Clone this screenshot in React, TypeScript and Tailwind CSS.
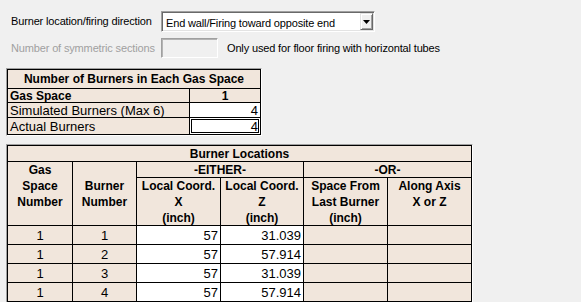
import React from "react";

const beige = "bg-[#f1e6dc]";

function Cell({
  children,
  className = "",
}: {
  children?: React.ReactNode;
  className?: string;
}) {
  return <div className={`flex ${className}`}>{children}</div>;
}

export default function App() {
  const rows = [
    { g: "1", b: "1", x: "57", z: "31.039" },
    { g: "1", b: "2", x: "57", z: "57.914" },
    { g: "1", b: "3", x: "57", z: "31.039" },
    { g: "1", b: "4", x: "57", z: "57.914" },
  ];
  return (
    <div
      className="w-[581px] h-[302px] bg-[#f0f0f0] overflow-hidden text-black"
      style={{ fontFamily: '"Liberation Sans", Arial, sans-serif' }}
    >
      {/* Row 1 */}
      <div className="flex items-center h-[21px] mt-[11px] pl-[11px] text-[11px] tracking-[-0.15px]">
        <div className="w-[150px]">Burner location/firing direction</div>
        <div className="relative w-[214px] h-[21px] bg-white border border-t-[#a0a0a0] border-l-[#a0a0a0] border-r-[#ffffff] border-b-[#ffffff] shadow-[inset_1px_1px_0_#696969,inset_-1px_-1px_0_#e3e3e3]">
          <div className="absolute left-[4px] top-[3px]">End wall/Firing toward opposite end</div>
          <div className="absolute right-[1px] top-[1px] w-[13px] h-[17px] bg-[#f0f0f0] border border-t-[#e3e3e3] border-l-[#e3e3e3] border-r-[#696969] border-b-[#696969] shadow-[inset_1px_1px_0_#ffffff,inset_-1px_-1px_0_#a0a0a0] flex items-center justify-center">
            <svg width="7" height="4" viewBox="0 0 7 4">
              <polygon points="0,0 7,0 3.5,4" fill="#000" />
            </svg>
          </div>
        </div>
      </div>

      {/* Row 2 */}
      <div className="flex items-center h-[20px] mt-[6px] pl-[11px] text-[11px] tracking-[-0.15px]">
        <div className="w-[150px] text-[#a0a0a0]">Number of symmetric sections</div>
        <div className="w-[57px] h-[20px] bg-[#f0f0f0] border border-t-[#a0a0a0] border-l-[#a0a0a0] border-r-[#ffffff] border-b-[#ffffff] shadow-[inset_1px_1px_0_#b4b4b4]" />
        <div className="ml-[9px]">Only used for floor firing with horizontal tubes</div>
      </div>

      {/* Table 1 */}
      <div className="mt-[10px] ml-[6px] inline-block align-top border border-t-[#a0a0a0] border-l-[#a0a0a0] border-r-white border-b-white">
        <div className="grid grid-cols-[181px_70px] grid-rows-[18px_13px_14px_16px] gap-[1px] p-[1px] bg-black text-[13px] leading-none">
          <Cell className={`col-span-2 ${beige} items-center justify-center font-bold text-[12px]`}>
            Number of Burners in Each Gas Space
          </Cell>
          <Cell className={`${beige} items-center pl-[2px] font-bold text-[12px]`}>Gas Space</Cell>
          <Cell className={`${beige} items-center justify-center font-bold text-[12px]`}>1</Cell>
          <Cell className={`${beige} items-center pl-[2px]`}>Simulated Burners (Max 6)</Cell>
          <Cell className="bg-white items-center justify-end pr-[2px]">4</Cell>
          <Cell className={`${beige} items-center pl-[2px]`}>Actual Burners</Cell>
          <Cell className="bg-white items-center justify-end pr-[2px] shadow-[inset_0_0_0_1px_#ffffff,inset_0_0_0_2px_#000000]">
            4
          </Cell>
        </div>
      </div>

      {/* Table 2 */}
      <div className="block">
        <div className="mt-[8px] ml-[6px] inline-block align-top border border-t-[#a0a0a0] border-l-[#a0a0a0] border-r-white border-b-white">
          <div className="grid grid-cols-[64px_63px_83px_82px_83px_83px] grid-rows-[15px_15px_47px_18px_18px_18px_18px] gap-[1px] p-[1px] bg-black text-[13px] leading-none">
            <Cell className={`col-span-6 ${beige} items-center justify-center font-bold text-[12px]`}>
              Burner Locations
            </Cell>
            <Cell className={`row-span-2 ${beige} flex-col items-center font-bold text-[12px] leading-[16px]`}>
              <span>Gas</span>
              <span>Space</span>
              <span>Number</span>
            </Cell>
            <Cell className={`row-span-2 ${beige} flex-col items-center justify-center font-bold text-[12px] leading-[16px]`}>
              <span>Burner</span>
              <span>Number</span>
            </Cell>
            <Cell className={`col-span-2 ${beige} items-center justify-center font-bold text-[12px]`}>-EITHER-</Cell>
            <Cell className={`col-span-2 ${beige} items-center justify-center font-bold text-[12px]`}>-OR-</Cell>
            <Cell className={`${beige} flex-col items-center font-bold text-[12px] leading-[16px]`}>
              <span>Local Coord.</span>
              <span>X</span>
              <span>(inch)</span>
            </Cell>
            <Cell className={`${beige} flex-col items-center font-bold text-[12px] leading-[16px]`}>
              <span>Local Coord.</span>
              <span>Z</span>
              <span>(inch)</span>
            </Cell>
            <Cell className={`${beige} flex-col items-center font-bold text-[12px] leading-[16px]`}>
              <span>Space From</span>
              <span>Last Burner</span>
              <span>(inch)</span>
            </Cell>
            <Cell className={`${beige} flex-col items-center font-bold text-[12px] leading-[16px]`}>
              <span>Along Axis</span>
              <span>X or Z</span>
            </Cell>
            {rows.map((r, i) => (
              <React.Fragment key={i}>
                <Cell className={`${beige} items-center justify-center`}>{r.g}</Cell>
                <Cell className={`${beige} items-center justify-center`}>{r.b}</Cell>
                <Cell className="bg-white items-center justify-end pr-[2px]">{r.x}</Cell>
                <Cell className="bg-white items-center justify-end pr-[2px]">{r.z}</Cell>
                <Cell className={beige} />
                <Cell className={beige} />
              </React.Fragment>
            ))}
          </div>
        </div>
      </div>
    </div>
  );
}
